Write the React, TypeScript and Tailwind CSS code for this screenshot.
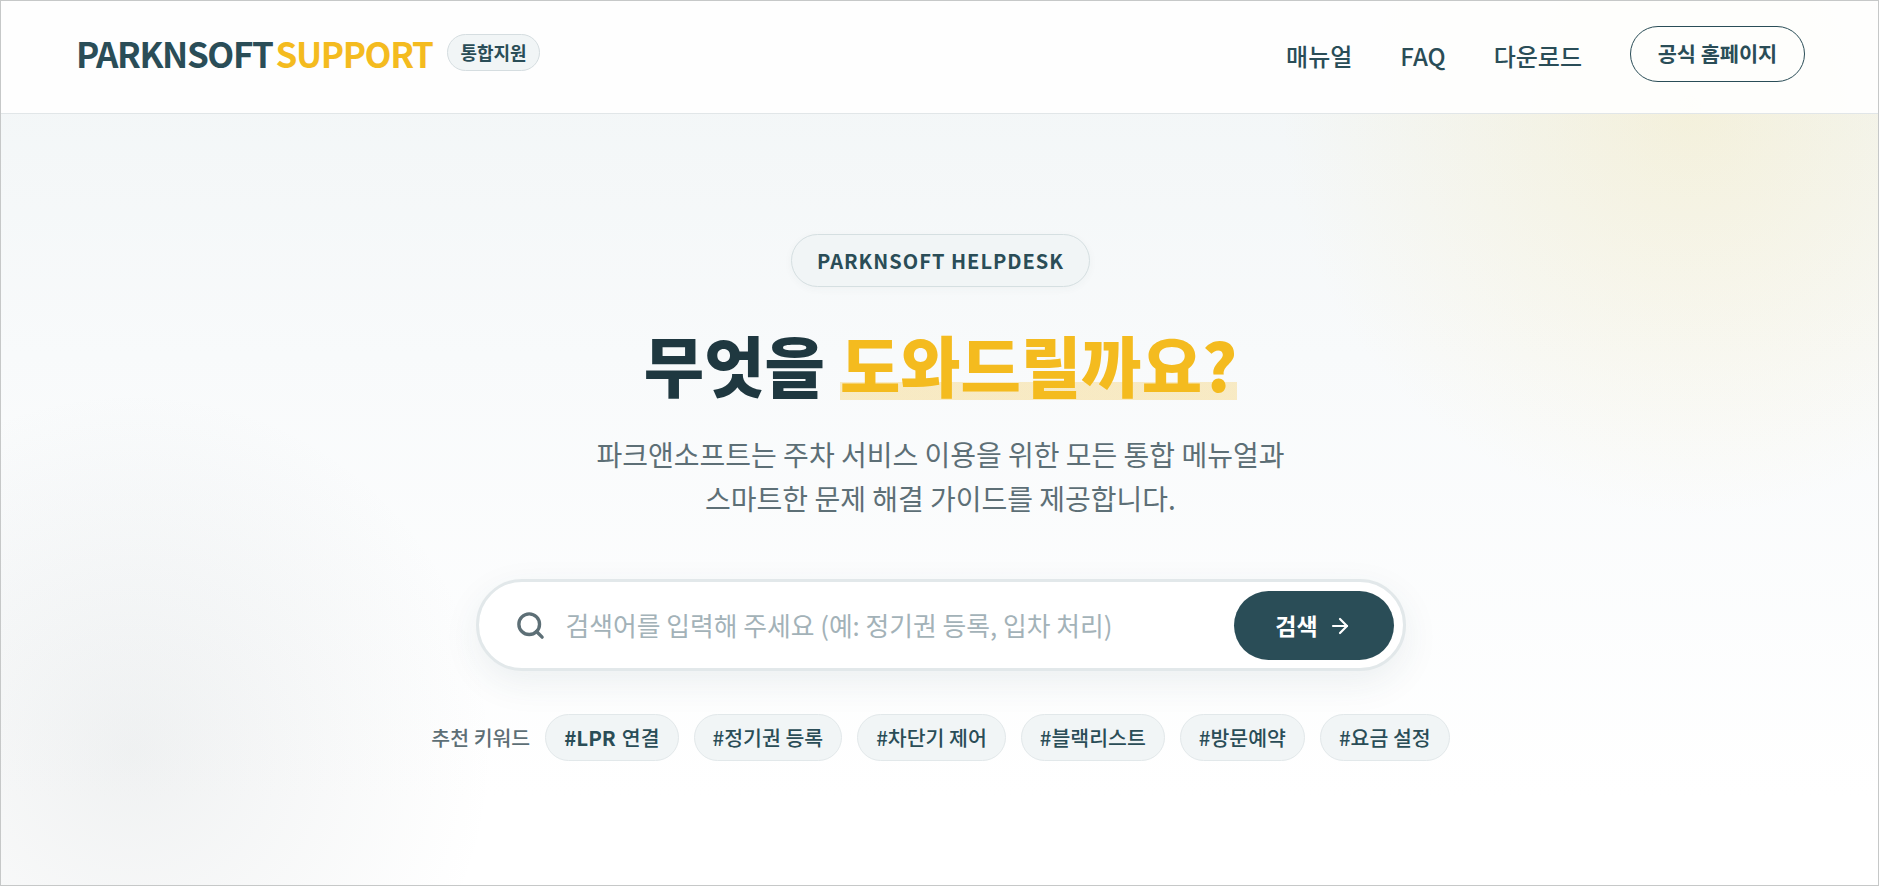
import { ArrowRight, Search } from "lucide-react";

const keywords = ["#정기권 등록", "#차단기 제어", "#블랙리스트", "#방문예약", "#요금 설정"];

const Header = () => (
  <header className="flex h-[113px] items-center justify-between border-b border-[#e1e6e8] bg-white/90 pr-[73px] pl-[75px]">
    <div className="flex items-center gap-[15px] pb-[9px]">
      <div className="flex text-[35px] leading-none font-bold tracking-[-1.4px]">
        <span className="text-[#2a4d57]">PARKNSOFT</span>
        <span className="ml-[3px] text-[#f4bb1f]">SUPPORT</span>
      </div>
      <span className="rounded-full border border-[#d5dde0] bg-[#f1f5f6] px-[12px] py-[4px] text-[18px] font-bold text-[#2a4d57]">
        통합지원
      </span>
    </div>
    <nav className="flex items-center gap-12 pb-[3px] text-[24px] font-medium text-[#2a4d57]">
      <a>매뉴얼</a>
      <a>FAQ</a>
      <a>다운로드</a>
      <a className="mb-[4px] flex h-[56px] w-[175px] items-center justify-center rounded-full border border-[#2a4d57] text-[20.8px] font-bold">
        공식 홈페이지
      </a>
    </nav>
  </header>
);

const SearchBox = () => (
  <div className="mt-[58px] flex h-[92px] w-[930px] items-center rounded-full border-[3px] border-[#e2e8ea] bg-white pr-[9px] pl-[36px] shadow-[0_12px_36px_rgba(42,77,87,0.08)]">
    <Search className="h-[31px] w-[31px] text-[#5d6f76]" strokeWidth={2.6} />
    <span className="ml-[20px] flex-1 text-[25.8px] text-[#a3b2b8]">
      검색어를 입력해 주세요 (예: 정기권 등록, 입차 처리)
    </span>
    <button className="mt-[1px] flex h-[69px] w-[160px] items-center justify-center gap-[10px] rounded-full bg-[#2a4d57] text-[23px] font-bold text-white">
      검색
      <ArrowRight className="h-[24px] w-[24px]" strokeWidth={2.2} />
    </button>
  </div>
);

const Keywords = () => (
  <div className="mt-[43px] flex items-center gap-[15px]">
    <span className="text-[20.5px] font-medium text-[#5d6f76]">추천 키워드</span>
    <span className="flex h-[47px] items-center rounded-full border border-[#e2e8ea] bg-[#f1f5f6] px-[18px] text-[20.5px] font-medium text-[#2a4d57]">
      <b className="mr-[6px] font-bold">#LPR</b>연결
    </span>
    {keywords.map((k) => (
      <span
        key={k}
        className="flex h-[47px] items-center rounded-full border border-[#e2e8ea] bg-[#f1f5f6] px-[18px] text-[20.5px] font-medium text-[#2a4d57]"
      >
        {k}
      </span>
    ))}
  </div>
);

export default function App() {
  return (
    <div className="flex h-[886px] flex-col overflow-hidden border border-[#c6c8c8] bg-[radial-gradient(circle_at_90%_12%,rgba(245,220,130,0.24),transparent_22%),radial-gradient(circle_at_7%_85%,rgba(120,135,140,0.115),transparent_19%),linear-gradient(180deg,#f1f5f6_0%,#f8fafb_40%,#ffffff_90%)] font-['Noto_Sans_CJK_KR','Noto_Sans',sans-serif]">
      <Header />
      <main className="flex flex-col items-center pt-[120px] pl-[2px]">
        <span className="flex h-[53px] w-[299px] items-center justify-center rounded-full border border-[#d5dfe1] bg-[#f1f5f6] text-[20px] font-bold tracking-[1px] text-[#2a4d57] shadow-[0_2px_8px_rgba(42,77,87,0.04)]">
          PARKNSOFT HELPDESK
        </span>
        <h1 className="mt-[36px] text-[65.6px] leading-[82.5px] font-extrabold text-[#1f3840]">
          무엇을{" "}
          <span className="bg-[linear-gradient(transparent_69.5%,rgba(245,185,30,0.25)_69.5%,rgba(245,185,30,0.25)_88.5%,transparent_88.5%)] text-[#f4bb1f]">
            도와드릴까요?
          </span>
        </h1>
        <p className="mt-[26px] text-center text-[28px] leading-[44.8px] text-[#5d6f76]">
          파크앤소프트는 주차 서비스 이용을 위한 모든 통합 메뉴얼과
          <br />
          스마트한 문제 해결 가이드를 제공합니다.
        </p>
        <SearchBox />
        <Keywords />
      </main>
    </div>
  );
}
